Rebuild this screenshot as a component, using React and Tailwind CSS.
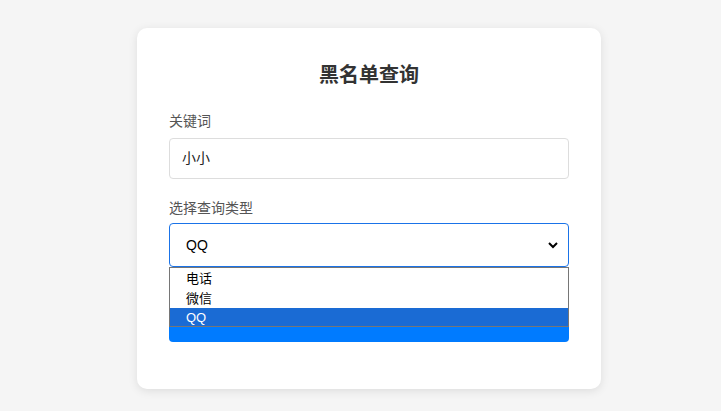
import React from 'react';

export default function App() {
  const font = { fontFamily: '"Liberation Sans", "Noto Sans CJK SC", sans-serif' };
  return (
    <div className="min-h-screen w-full bg-[#f5f5f5] pt-[28px]" style={font}>
      <div className="ml-[137px] w-[464px] h-[361px] bg-white rounded-[10px] shadow-[0_2px_10px_rgba(0,0,0,0.1)] px-[32px] pt-[32px]">
        <h2 className="text-[20px] leading-[30px] font-bold text-[#333] text-center mb-[22px]">黑名单查询</h2>

        <div className="mb-[20px]">
          <label className="block text-[14px] leading-[18px] text-[#555] mb-[8px]">关键词</label>
          <div className="h-[41px] w-full border border-[#ddd] rounded-[4px] px-[12px] flex items-center text-[14px] text-[#222]">
            小小
          </div>
        </div>

        <div className="relative">
          <label className="block text-[14px] leading-[18px] text-[#555] mb-[6px]">选择查询类型</label>
          <div className="h-[44px] w-full border border-[#1a73e8] rounded-[4px] pl-[16px] pr-[8px] flex items-center justify-between text-[14px] text-black">
            <span>QQ</span>
            <svg width="12" height="12" viewBox="0 0 12 12" className="mr-[1px]">
              <path d="M2 4 L6 8 L10 4" fill="none" stroke="#000" strokeWidth="2" />
            </svg>
          </div>

          <div className="mt-[30px] h-[45px] w-full bg-[#007bff] rounded-[4px]"></div>

          <div className="absolute left-0 top-[68px] w-full border border-[#767676] bg-white text-[13px] leading-[19px] text-black z-10">
            <div className="pl-[16px] h-[20px] flex items-center">电话</div>
            <div className="pl-[16px] h-[20px] flex items-center">微信</div>
            <div className="pl-[16px] h-[18px] flex items-center bg-[#1a6bd4] text-white">QQ</div>
          </div>
        </div>
      </div>
    </div>
  );
}
